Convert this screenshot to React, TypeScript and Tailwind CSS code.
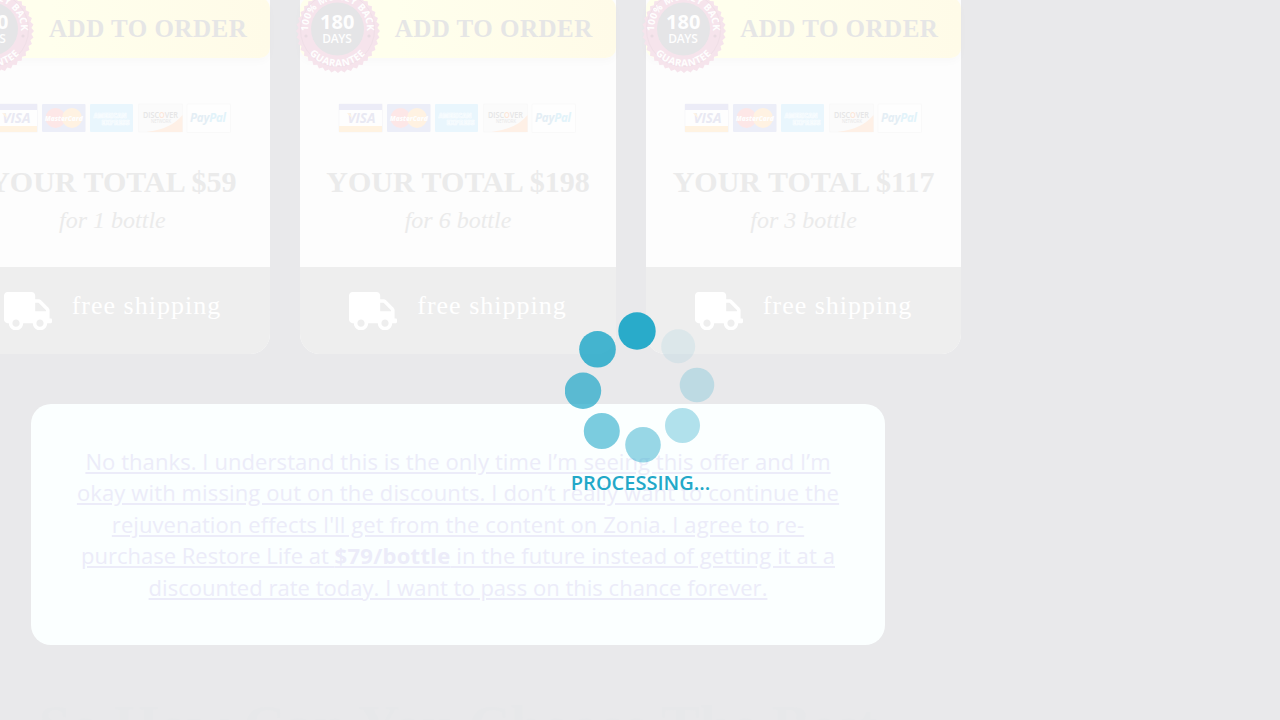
import { FaTruck } from "react-icons/fa";

const offers = [
  { id: "one", total: "$59", bottles: 1 },
  { id: "six", total: "$198", bottles: 6 },
  { id: "three", total: "$117", bottles: 3 },
];

const teeth = Array.from({ length: 80 }, (_, i) => {
  const r = i % 2 ? 39.5 : 42;
  const a = (i / 80) * Math.PI * 2;
  return `${(42 + r * Math.cos(a)).toFixed(2)},${(42 + r * Math.sin(a)).toFixed(2)}`;
}).join(" ");

function Badge({ id }: { id: string }) {
  return (
    <svg
      viewBox="0 0 84 84"
      className="absolute -top-[9px] -left-[4.2px] h-[84px] w-[84px]"
      fontFamily="Open Sans, sans-serif"
      fontWeight="700"
      fill="#fefefe"
      textAnchor="middle"
    >
      <defs>
        <path id={`top-${id}`} d="M12 40.5 A29.5 29.5 0 0 1 71 40.5" />
        <path id={`bottom-${id}`} d="M4.5 40.5 A37 37 0 0 0 78.5 40.5" />
      </defs>
      <polygon points={teeth} fill="#f6e4ec" />
      <circle cx="41.5" cy="40.5" r="37" fill="none" stroke="#f0dfe7" strokeWidth="1" />
      <circle cx="41.5" cy="40" r="26.5" fill="#e5e5e7" />
      <circle cx="73" cy="47" r="1.6" fill="#e9dbe2" />
      <circle cx="10" cy="47" r="1.6" fill="#e9dbe2" />
      <text x="41.2" y="39.5" fontSize="20">180</text>
      <text x="41" y="54.2" fontSize="12" fontWeight="600" textLength="29.5">DAYS</text>
      <text fontSize="9.8" letterSpacing="0.15">
        <textPath href={`#top-${id}`} startOffset="50%">100% MONEY BACK</textPath>
      </text>
      <text fontSize="9.8" letterSpacing="0.5">
        <textPath href={`#bottom-${id}`} startOffset="50%">GUARANTEE</textPath>
      </text>
    </svg>
  );
}

function Cards() {
  return (
    <svg viewBox="0 0 240 32" className="ml-[0.5px] h-8 w-[240px]" fontFamily="Open Sans, sans-serif" textAnchor="middle">
      <rect x="1" y="2" width="43.5" height="28" rx="1" fill="#fefefe" stroke="#f7f7f9" />
      <path d="M1 2h43v6H1z" fill="#ececf7" />
      <path d="M1 24h43v6H1z" fill="#fff3e2" />
      <text x="23.5" y="21.2" fontSize="14.5" fontWeight="700" fontStyle="italic" fill="#e9e9f3" textLength="28" lengthAdjust="spacingAndGlyphs">VISA</text>
      <path d="m9 11 3.5.5 1.5 5z" fill="#fff3e2" />
      <rect x="49" y="2" width="43.5" height="28" rx="1" fill="#eceef8" />
      <circle cx="62.5" cy="16" r="10" fill="#fde7e7" />
      <circle cx="79" cy="16" r="10" fill="#fff2e2" />
      <text x="70.7" y="18.5" fontSize="7.5" fontWeight="800" fontStyle="italic" fill="#fefefe" textLength="38" lengthAdjust="spacingAndGlyphs">MasterCard</text>
      <rect x="97" y="2" width="43" height="28" rx="1" fill="#e9f6fd" />
      <g fill="#e9f6fd" stroke="#f9fdff" strokeWidth="0.7" fontSize="6.3" fontWeight="800">
        <text x="117" y="15.5" textLength="33">AMERICAN</text>
        <text x="122.5" y="22.5" textLength="28">EXPRESS</text>
      </g>
      <rect x="145.5" y="2" width="44" height="28" rx="1" fill="#fbfbfb" stroke="#f9f9f9" />
      <path d="M189.5 13v17h-36q25-3 36-17z" fill="#fef0e6" />
      <text x="167.5" y="15.5" fontSize="8" fontWeight="600" fill="#e6e6e6" textLength="35" lengthAdjust="spacingAndGlyphs">
        DISC<tspan fill="#fde6d8">O</tspan>VER
      </text>
      <text x="168" y="21" fontSize="4.5" fill="#e6e6e6" textLength="20" lengthAdjust="spacingAndGlyphs">NETWORK</text>
      <rect x="194" y="2" width="43.5" height="28.5" rx="1" fill="#fefefe" stroke="#f9f9f9" />
      <text x="215" y="20" fontSize="11.5" fontWeight="700" fontStyle="italic" fill="#e4eef5" textLength="36">
        Pay<tspan fill="#e2f3fa">Pal</tspan>
      </text>
    </svg>
  );
}

function Offer({ id, total, bottles }: (typeof offers)[number]) {
  return (
    <article className="relative flex h-[356px] w-[315.6px] shrink-0 flex-col rounded-b-[20px] bg-[#fdfdfd] text-center">
      <button className="flex h-[60px] w-full items-center justify-end rounded-[10px] bg-linear-to-r from-[#ffffed] from-30% to-[#fffbe8] pt-[2px] pr-[23px] text-[25px] leading-[30px] font-bold tracking-[0.5px] whitespace-nowrap text-[#e6e6e6] shadow-[0_4px_8px_rgba(0,0,0,0.02)]">
        ADD TO ORDER
      </button>
      <Badge id={id} />
      <div className="flex justify-center pt-[44px]">
        <Cards />
      </div>
      <div className="pt-[31px] text-[30px] leading-[34px] font-bold text-[#ebebeb]">YOUR TOTAL {total}</div>
      <div className="pt-[7px] text-[24px] leading-[28px] text-[#ebebeb] italic">for {bottles} bottle</div>
      <footer className="mt-auto flex h-[87px] items-start justify-center gap-5 rounded-b-[20px] bg-[#eeeeee] pt-[24px] text-white">
        <FaTruck className="mt-[0.6px] h-[38.4px] w-[48px]" />
        <span className="text-[26px] leading-[30px] tracking-[1px]">free shipping</span>
      </footer>
    </article>
  );
}

const dots = [
  [72, 19, 18.7, 0.97],
  [32.5, 37.3, 18.3, 0.84],
  [18, 78.8, 18.2, 0.72],
  [36.8, 119, 18, 0.59],
  [78, 132.8, 17.8, 0.46],
  [117.5, 113.5, 17.5, 0.34],
  [132, 73, 17.3, 0.216],
  [113.2, 34.2, 17, 0.085],
];

export default function App() {
  return (
    <div className="relative h-[720px] w-[1280px] overflow-hidden bg-[#e9e9eb] font-['Liberation_Serif',serif]">
      <main className="flex w-[916px] flex-col items-center">
        <section className="-mt-[2px] flex gap-[30px]">
          {offers.map((offer) => (
            <Offer key={offer.id} {...offer} />
          ))}
        </section>
        <section className="mt-[50px] flex h-[241px] w-[854px] shrink-0 justify-center rounded-[20px] bg-[#fbffff] pt-[42px]">
          <a className="block w-[774px] text-center font-['Open_Sans',sans-serif] text-[22px] leading-[31.43px] text-[#ececf9] underline">
            <span className="tracking-[0.08px]">
              No thanks. I understand this is the only time I’m seeing this offer and I’m
            </span>
            <br />
            <span className="tracking-[0.13px]">
              okay with missing out on the discounts. I don’t really want to continue the
            </span>
            <br />
            <span className="tracking-[0.085px]">
              rejuvenation effects I'll get from the content on Zonia. I agree to re-
            </span>
            <br />
            purchase Restore Life at <b className="tracking-[0.27px]">$79/bottle</b>
            <span className="tracking-[0.1px]"> in the future instead of getting it at a</span>
            <br />
            <span className="tracking-[0.025px]">
              discounted rate today. I want to pass on this chance forever.
            </span>
          </a>
        </section>
        <h2 className="mt-[51px] text-[57.6px] leading-[60px] font-bold whitespace-nowrap text-[#e7e8ea]">
          So How Can You Choose The Best
        </h2>
      </main>
      <div className="absolute inset-0 flex flex-col items-center pt-[312px]">
        <svg viewBox="0 0 150 152" className="h-[152px] w-[150px]">
          {dots.map(([cx, cy, r, o]) => (
            <circle key={cx} cx={cx} cy={cy} r={r} fill="#22a8c8" fillOpacity={o} />
          ))}
        </svg>
        <p className="mt-[5px] pl-px font-['Open_Sans',sans-serif] text-[20px] leading-[28px] font-semibold text-[#22a8c8]">
          PROCESSING...
        </p>
      </div>
    </div>
  );
}
